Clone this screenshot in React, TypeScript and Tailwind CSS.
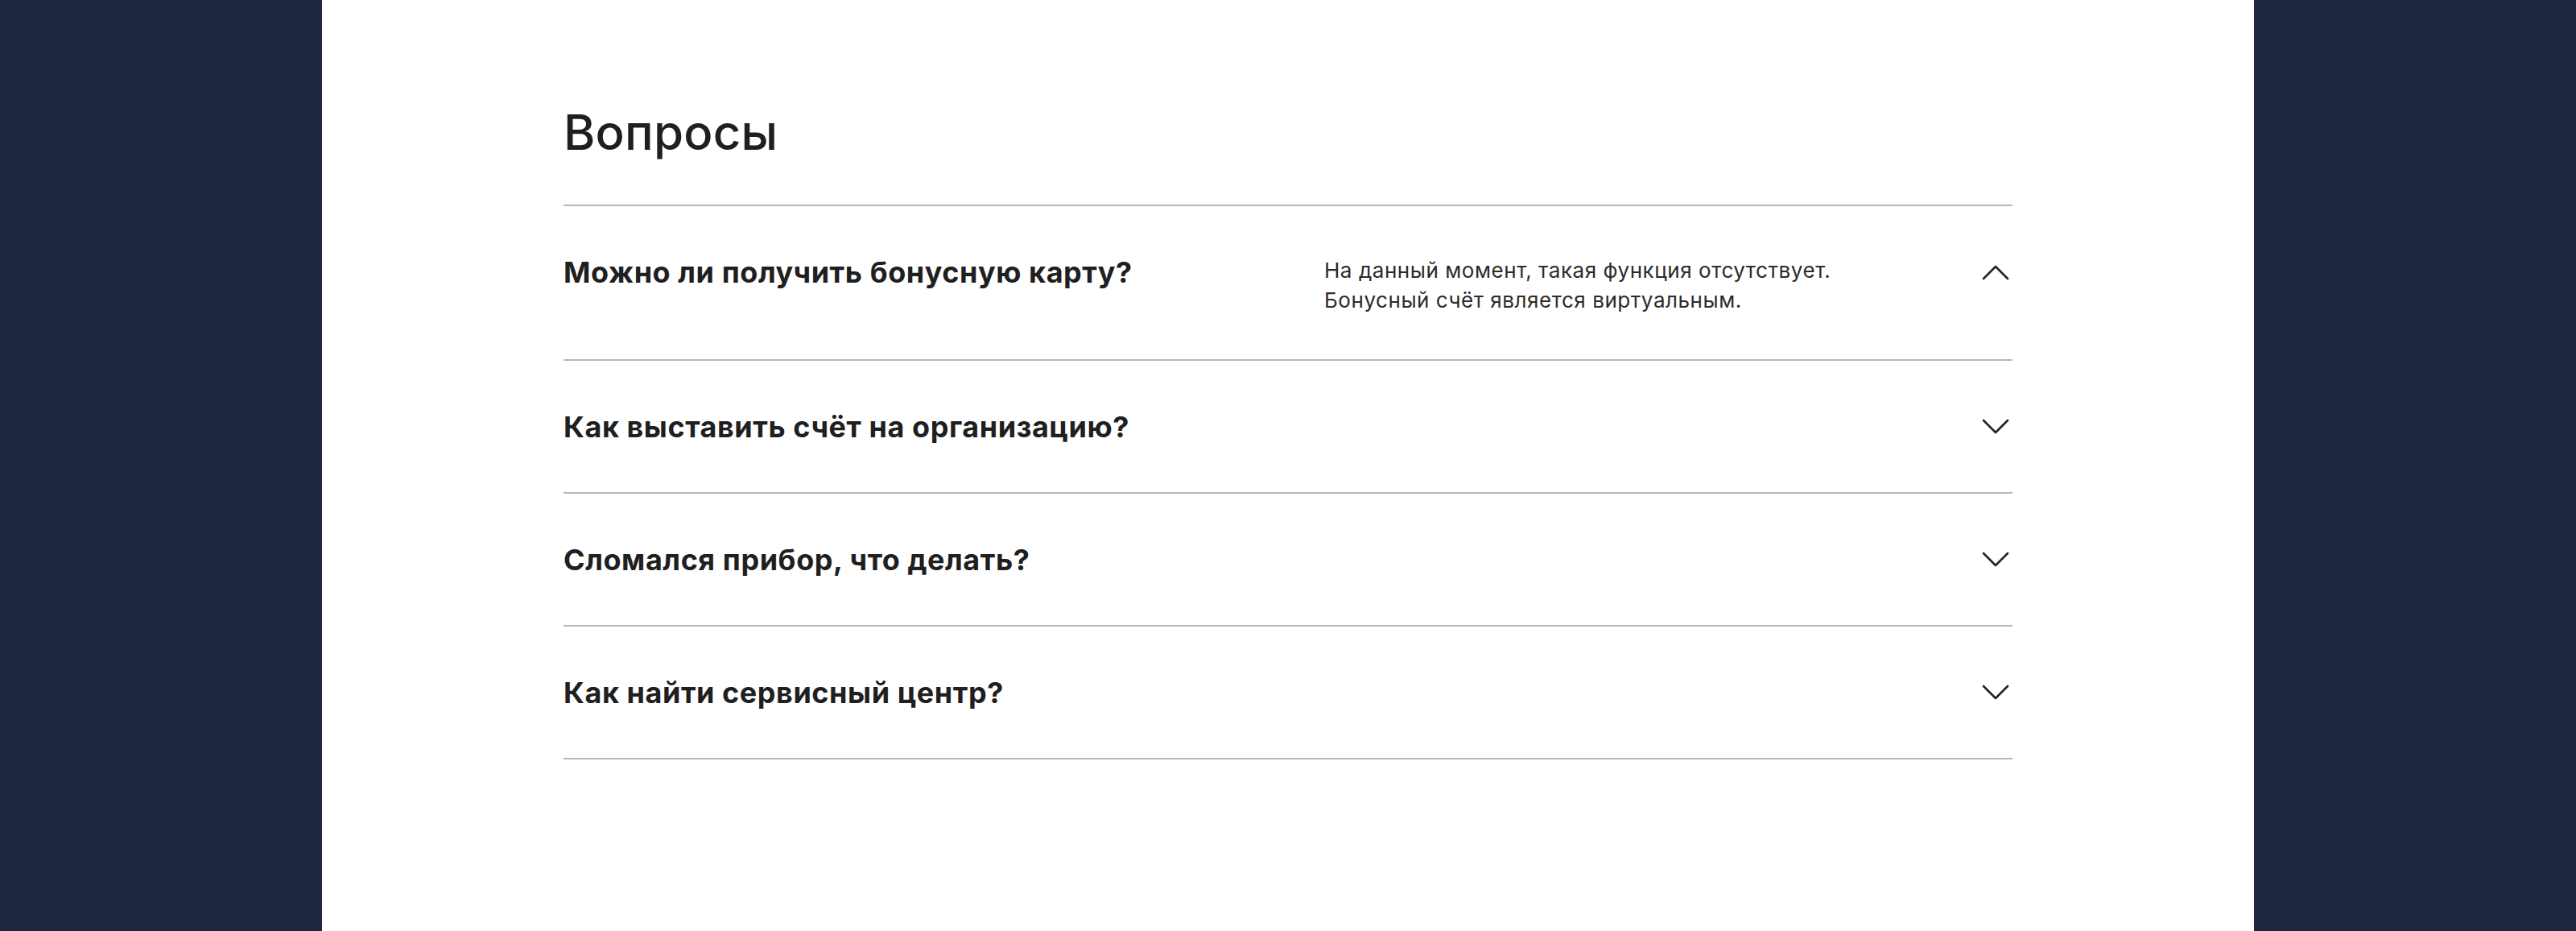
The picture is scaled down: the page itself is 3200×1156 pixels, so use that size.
const faq = [
  {
    q: "Можно ли получить бонусную карту?",
    a: "На данный момент, такая функция отсутствует.\nБонусный счёт является виртуальным.",
    open: true,
  },
  { q: "Как выставить счёт на организацию?", a: "", open: false },
  { q: "Сломался прибор, что делать?", a: "", open: false },
  { q: "Как найти сервисный центр?", a: "", open: false },
];

function Chevron({ up }: { up: boolean }) {
  return (
    <svg width="40" height="20" viewBox="0 0 40 20" fill="none" className="shrink-0">
      <polyline
        points={up ? "4,18 19,3 34,18" : "4,2 19,17 34,2"}
        stroke="#222"
        strokeWidth="2.6"
        strokeLinecap="round"
        strokeLinejoin="round"
      />
    </svg>
  );
}

function App() {
  return (
    <div className="bg-[#1e2640] min-h-[1156px] w-full flex justify-center font-['Inter',sans-serif]">
      {/* white page */}
      <div className="bg-white w-[2400px] min-h-[1156px] px-[300px] pt-[128px]">
        <h2 className="text-[60px] leading-[72px] font-medium text-[#1f1f1f] tracking-[0.2px]">
          Вопросы
        </h2>

        <div className="mt-[54px] border-b-2 border-[#b8b8b8]">
          {faq.map((item) => (
            <div
              key={item.q}
              className={
                item.open
                  ? "flex items-start border-t-2 border-[#b8b8b8] pt-[60px] pb-[55px]"
                  : "flex items-start border-t-2 border-[#b8b8b8] py-[59.5px]"
              }
            >
              <div className="w-[945px] shrink-0 text-[36px] leading-[44px] font-bold text-[#1f1f1f] tracking-[0.55px]">
                {item.q}
              </div>
              <div className="flex-1 pt-[1px] text-[26px] leading-[37px] text-[#2b2b2b] tracking-[0.55px] whitespace-pre-line">
                {item.a}
              </div>
              <div className="h-[44px] flex items-center">
                <Chevron up={item.open} />
              </div>
            </div>
          ))}
        </div>
      </div>
    </div>
  );
}

export default App;
